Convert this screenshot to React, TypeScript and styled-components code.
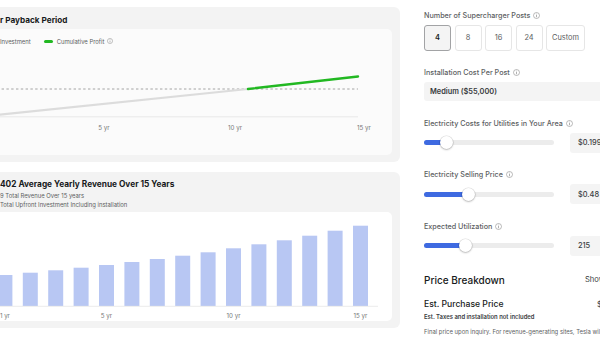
import React from "react";
import styled, { createGlobalStyle } from "styled-components";

const Global = createGlobalStyle`
  html, body { margin: 0; padding: 0; background: #fff; }
  body { font-family: Inter, "Noto Sans", sans-serif; -webkit-font-smoothing: antialiased; }
  * { box-sizing: border-box; }
`;

const Page = styled.div`
  display: flex;
  width: 600px;
  height: 338px;
  overflow: hidden;
  background: #fff;
  font-family: Inter, "Noto Sans", sans-serif;
`;

const LeftColumn = styled.div`
  flex: 0 0 448px;
  margin-left: -48px;
  padding-top: 7px;
  display: flex;
  flex-direction: column;
  gap: 10px;
`;

const Card = styled.section<{ $h: number }>`
  height: ${(p) => p.$h}px;
  background: #f3f3f3;
  border-radius: 6px;
  padding: 6px 8px 7px 16px;
  display: flex;
  flex-direction: column;
`;

const CardTitle = styled.h2<{ $size: number; $lh: number }>`
  margin: 0;
  padding-left: 32px;
  font-size: ${(p) => p.$size}px;
  line-height: ${(p) => p.$lh}px;
  font-weight: 650;
  color: #171a20;
  white-space: nowrap;
`;

const SubLine = styled.div`
  padding-left: 32px;
  font-size: 5.9px;
  line-height: 9px;
  color: #5c5e62;
  white-space: nowrap;
`;

const ChartArea = styled.div<{ $bg: string; $mt: number }>`
  flex: 1;
  margin-top: ${(p) => p.$mt}px;
  background: ${(p) => p.$bg};
  border-radius: 5px;
  display: flex;
  flex-direction: column;
  overflow: hidden;
`;

const Legend = styled.div`
  display: flex;
  align-items: center;
  height: 12px;
  margin-top: 6px;
  padding-left: 32px;
  font-size: 5.9px;
  color: #5c5e62;
  white-space: nowrap;
`;

const Swatch = styled.span<{ $color: string }>`
  display: inline-block;
  width: 9px;
  height: 3px;
  border-radius: 2px;
  background: ${(p) => p.$color};
  margin: 0 4px 0 13px;
`;

const RightColumn = styled.div`
  flex: 0 0 230px;
  margin-left: 24px;
  padding-top: 10px;
  display: flex;
  flex-direction: column;
  color: #171a20;
`;

const Fields = styled.div`
  display: flex;
  flex-direction: column;
  gap: 17px;
`;

const Field = styled.div`
  display: flex;
  flex-direction: column;
  gap: 4.5px;
`;

const Label = styled.div`
  display: flex;
  align-items: center;
  height: 10px;
  font-size: 7.2px;
  font-weight: 500;
  color: #5c5e62;
  white-space: nowrap;
`;

const InfoIcon = ({ size = 7 }: { size?: number }) => (
  <svg width={size} height={size} viewBox="0 0 14 14" style={{ marginLeft: 3 }}>
    <circle cx="7" cy="7" r="6" fill="none" stroke="#8e8e8e" strokeWidth="1.2" />
    <line x1="7" y1="6" x2="7" y2="10.5" stroke="#8e8e8e" strokeWidth="1.4" />
    <circle cx="7" cy="4" r="0.9" fill="#8e8e8e" />
  </svg>
);

const ButtonRow = styled.div`
  display: flex;
  gap: 3.5px;
`;

const OptionButton = styled.button<{ $selected?: boolean; $w: number }>`
  width: ${(p) => p.$w}px;
  height: 26px;
  padding: 0;
  border-radius: 3px;
  border: 1px solid ${(p) => (p.$selected ? "#a2a3a5" : "#e6e6e6")};
  background: ${(p) => (p.$selected ? "#f4f4f4" : "#fff")};
  color: ${(p) => (p.$selected ? "#171a20" : "#5c5e62")};
  font-family: inherit;
  font-size: 7.4px;
  font-weight: ${(p) => (p.$selected ? 600 : 400)};
`;

const Select = styled.div`
  height: 19px;
  width: 230px;
  background: #f4f4f4;
  border-radius: 3px;
  padding-left: 6px;
  display: flex;
  align-items: center;
  font-size: 7.4px;
  font-weight: 600;
  color: #393c41;
`;

const SliderRow = styled.div`
  display: flex;
  align-items: center;
  height: 20px;
`;

const Track = styled.div`
  position: relative;
  width: 130px;
  height: 5px;
  border-radius: 3px;
  background: #ececec;
`;

const Fill = styled.div<{ $w: number }>`
  width: ${(p) => p.$w}px;
  height: 100%;
  border-radius: 3px;
  background: #3e6ae1;
`;

const Thumb = styled.div<{ $x: number }>`
  position: absolute;
  top: 50%;
  left: ${(p) => p.$x}px;
  width: 13px;
  height: 13px;
  margin: -6.5px 0 0 -6.5px;
  border-radius: 50%;
  background: #fff;
  box-shadow: 0 0 0 0.6px rgba(0, 0, 0, 0.12), 0 1px 2px rgba(0, 0, 0, 0.22);
`;

const ValueBox = styled.div`
  margin-left: 16px;
  width: 56px;
  height: 20px;
  border-radius: 3px;
  background: #f4f4f4;
  padding-left: 8px;
  display: flex;
  align-items: center;
  font-size: 7.4px;
  font-weight: 500;
  color: #393c41;
`;

const PriceHeader = styled.div`
  display: flex;
  align-items: center;
  margin-top: 16px;
  height: 16px;
  white-space: nowrap;
`;

const HeaderTitle = styled.h3<{ $w: number; $size: number }>`
  margin: 0;
  flex: 0 0 ${(p) => p.$w}px;
  font-size: ${(p) => p.$size}px;
  font-weight: 500;
  color: #171a20;
`;

const SideText = styled.span<{ $size: number }>`
  font-size: ${(p) => p.$size}px;
  color: #393c41;
`;

const PurchaseRow = styled(PriceHeader)`
  margin-top: 10px;
  height: 13px;
`;

const Note = styled.div<{ $mt: number; $bold?: boolean }>`
  margin-top: ${(p) => p.$mt}px;
  height: 8px;
  line-height: 8px;
  font-size: 5.9px;
  font-weight: ${(p) => (p.$bold ? 600 : 400)};
  color: ${(p) => (p.$bold ? "#393c41" : "#5c5e62")};
  white-space: nowrap;
`;

const heights = [31, 33.3, 35.7, 38.3, 41, 44, 47, 50.3, 53.7, 57.7, 61.7, 65.7, 70.3, 75.3, 80.3];

const PaybackChart = () => (
  <svg width="424" height="108" viewBox="-32 47 424 108" style={{ display: "block" }}>
    <line x1="-32" y1="116.8" x2="358" y2="116.8" stroke="#e4e4e4" strokeWidth="0.8" />
    <line x1="-32" y1="89" x2="358" y2="89" stroke="#9a9a9a" strokeWidth="0.9" strokeDasharray="2.4 2.4" />
    <line x1="-32" y1="118" x2="248" y2="89" stroke="#dcdcdc" strokeWidth="2.2" strokeLinecap="round" />
    <line x1="248" y1="89" x2="358" y2="76.5" stroke="#22b822" strokeWidth="2.4" strokeLinecap="round" />
    {[
      ["5 yr", 104],
      ["10 yr", 235],
      ["15 yr", 364],
    ].map(([t, x]) => (
      <text key={t as string} x={x as number} y="129.5" fontSize="6.2" fill="#777" textAnchor="middle" fontFamily="Inter, sans-serif">
        {t}
      </text>
    ))}
  </svg>
);

const RevenueChart = () => (
  <svg width="424" height="108" viewBox="-32 212 424 108" style={{ display: "block" }}>
    {heights.map((h, i) => {
      const cx = 4.9 + i * 25.4;
      return <rect key={i} x={cx - 7.5} y={306 - h} width="15" height={h} fill="#b8c7f3" />;
    })}
    <line x1="-32" y1="306.3" x2="378" y2="306.3" stroke="#e6e6e6" strokeWidth="0.8" />
    {[
      ["1 yr", 0],
      ["5 yr", 4],
      ["10 yr", 9],
      ["15 yr", 14],
    ].map(([t, i]) => (
      <text key={t as string} x={4.9 + (i as number) * 25.4} y="317.5" fontSize="6.2" fill="#777" textAnchor="middle" fontFamily="Inter, sans-serif">
        {t}
      </text>
    ))}
  </svg>
);

const sliders = [
  { label: "Electricity Costs for Utilities in Your Area", pos: 22, value: "$0.199" },
  { label: "Electricity Selling Price", pos: 44, value: "$0.48" },
  { label: "Expected Utilization", pos: 41, value: "215" },
];

export default function App() {
  return (
    <Page>
      <Global />
      <LeftColumn>
        <Card $h={155}>
          <CardTitle $size={8.2} $lh={14}>r Payback Period</CardTitle>
          <ChartArea $bg="#fbfbfb" $mt={2}>
            <Legend>
              Investment
              <Swatch $color="#22b822" />
              Cumulative Profit
              <InfoIcon size={6} />
            </Legend>
            <PaybackChart />
          </ChartArea>
        </Card>
        <Card $h={156}>
          <CardTitle $size={8.3} $lh={13}>402 Average Yearly Revenue Over 15 Years</CardTitle>
          <SubLine>9 Total Revenue Over 15 years</SubLine>
          <SubLine>Total Upfront Investment Including installation</SubLine>
          <ChartArea $bg="#ffffff" $mt={3}>
            <RevenueChart />
          </ChartArea>
        </Card>
      </LeftColumn>
      <RightColumn>
        <Fields>
          <Field>
            <Label>
              Number of Supercharger Posts
              <InfoIcon />
            </Label>
            <ButtonRow>
              <OptionButton $selected $w={27}>4</OptionButton>
              <OptionButton $w={27}>8</OptionButton>
              <OptionButton $w={27}>16</OptionButton>
              <OptionButton $w={27}>24</OptionButton>
              <OptionButton $w={39}>Custom</OptionButton>
            </ButtonRow>
          </Field>
          <Field>
            <Label>
              Installation Cost Per Post
              <InfoIcon />
            </Label>
            <Select>Medium ($55,000)</Select>
          </Field>
          {sliders.map((s) => (
            <Field key={s.label}>
              <Label>
                {s.label}
                <InfoIcon />
              </Label>
              <SliderRow>
                <Track>
                  <Fill $w={s.pos} />
                  <Thumb $x={s.pos} />
                </Track>
                <ValueBox>{s.value}</ValueBox>
              </SliderRow>
            </Field>
          ))}
        </Fields>
        <PriceHeader>
          <HeaderTitle $w={161} $size={10}>Price Breakdown</HeaderTitle>
          <SideText $size={7.6}>Show Details</SideText>
        </PriceHeader>
        <PurchaseRow>
          <HeaderTitle $w={173} $size={8.6}>Est. Purchase Price</HeaderTitle>
          <SideText $size={8}>$220,000</SideText>
        </PurchaseRow>
        <Note $mt={2} $bold>Est. Taxes and installation not included</Note>
        <Note $mt={7}>Final price upon inquiry. For revenue-generating sites, Tesla will work with you</Note>
      </RightColumn>
    </Page>
  );
}
